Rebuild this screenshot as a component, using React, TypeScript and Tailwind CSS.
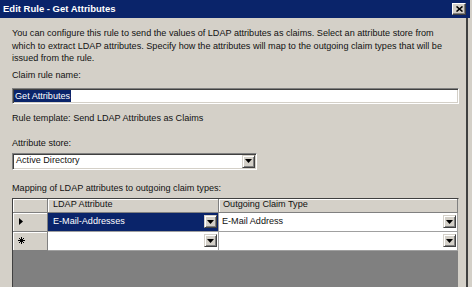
function DropBtn({ h = "h-[13px]" }: { h?: string }) {
  return (
    <div
      className={`flex ${h} w-[13px] shrink-0 items-center justify-center border border-t-[#d4d0c8] border-l-[#d4d0c8] border-b-[#404040] border-r-[#404040] bg-[#d4d0c8] shadow-[inset_1px_1px_0_#ffffff,inset_-1px_-1px_0_#808080]`}
    >
      <svg width="7" height="4" viewBox="0 0 7 4">
        <path d="M0 0h7L3.5 4z" fill="#000" />
      </svg>
    </div>
  );
}

function Sunken({ className = "", children }: { className?: string; children?: React.ReactNode }) {
  return (
    <div
      className={`border border-t-[#808080] border-l-[#808080] border-b-white border-r-white shadow-[inset_1px_1px_0_#404040,inset_-1px_-1px_0_#d4d0c8] ${className}`}
    >
      {children}
    </div>
  );
}

function HeadCell({ className = "", children }: { className?: string; children?: React.ReactNode }) {
  return (
    <div
      className={`flex items-center border-r border-b border-r-[#808080] border-b-[#808080] bg-[#d4d0c8] shadow-[inset_1px_1px_0_#ffffff] ${className}`}
    >
      {children}
    </div>
  );
}

export default function App() {
  return (
    <div className="flex h-[287px] w-[472px] flex-col overflow-hidden bg-[#d4d0c8] font-['Liberation_Sans',Arial,sans-serif] text-[9.1px] text-[#111]">
      {/* title bar */}
      <div className="flex h-[18px] w-[470px] shrink-0 items-center justify-between bg-[#0a246a] pl-[3px] pr-[4px]">
        <span className="text-[9.5px] font-bold text-white">Edit Rule - Get Attributes</span>
        <div className="flex h-[12px] w-[14px] items-center justify-center border border-t-white border-l-white border-b-[#404040] border-r-[#404040] bg-[#d4d0c8] shadow-[inset_-1px_-1px_0_#808080]">
          <svg width="7" height="6" viewBox="0 0 7 6">
            <path d="M0.5 0.5L6.5 5.5M6.5 0.5L0.5 5.5" stroke="#000" strokeWidth="1.6" />
          </svg>
        </div>
      </div>

      {/* body */}
      <div className="flex min-h-0 w-[468px] flex-1 flex-col border-r-2 border-r-[#404040] pl-[12px] pr-[7px] pt-[9px]">
        <p className="whitespace-nowrap leading-[12.5px]">
          You can configure this rule to send the values of LDAP attributes as claims. Select an attribute store from
          <br />
          which to extract LDAP attributes. Specify how the attributes will map to the outgoing claim types that will be
          <br />
          issued from the rule.
        </p>

        <div className="mt-[4px] leading-[12px]">Claim rule name:</div>
        <Sunken className="mt-[7px] flex h-[16px] items-center bg-white pl-[1px]">
          <span className="bg-[#0a246a] px-[1px] leading-[12px] text-white">Get Attributes</span>
        </Sunken>

        <div className="mt-[8px] leading-[12px]">Rule template: Send LDAP Attributes as Claims</div>

        <div className="mt-[13px] leading-[12px]">Attribute store:</div>
        <Sunken className="mt-[4px] flex h-[17px] w-[245px] items-center justify-between bg-white pl-[3px] pr-[1px]">
          <span>Active Directory</span>
          <DropBtn />
        </Sunken>

        <div className="mt-[12px] leading-[12px]">Mapping of LDAP attributes to outgoing claim types:</div>

        {/* grid */}
        <div className="mt-[4px] flex min-h-0 flex-1 flex-col border-t border-l border-r border-t-[#404040] border-l-[#404040] border-r-[#d4d0c8] bg-[#808080]">
          <div className="flex h-[14px] shrink-0">
            <HeadCell className="w-[35px]" />
            <HeadCell className="w-[171px] pl-[5px]">LDAP Attribute</HeadCell>
            <HeadCell className="flex-1 pl-[4px]">Outgoing Claim Type</HeadCell>
          </div>

          <div className="flex h-[19px] shrink-0">
            <HeadCell className="w-[35px] pl-[6px]">
              <svg width="4" height="7" viewBox="0 0 4 7">
                <path d="M0 0L4 3.5L0 7z" fill="#000" />
              </svg>
            </HeadCell>
            <div className="flex w-[171px] items-center justify-between border-r border-b border-r-[#a0a0a0] border-b-[#a0a0a0] bg-[#0a246a] pl-[5px] pr-[1px]">
              <span className="text-white">E-Mail-Addresses</span>
              <DropBtn />
            </div>
            <div className="flex flex-1 items-center justify-between border-r border-b border-r-[#a0a0a0] border-b-[#a0a0a0] bg-white pl-[3px] pr-[1px]">
              <span>E-Mail Address</span>
              <DropBtn />
            </div>
          </div>

          <div className="flex h-[19px] shrink-0">
            <HeadCell className="w-[35px] pl-[5px]">
              <svg width="7" height="7" viewBox="0 0 7 7">
                <path d="M3.5 0v7M0 3.5h7M1 1l5 5M6 1L1 6" stroke="#000" strokeWidth="1" />
              </svg>
            </HeadCell>
            <div className="flex w-[171px] items-center justify-end border-r border-b border-r-[#a0a0a0] border-b-[#a0a0a0] bg-white pr-[1px]">
              <DropBtn />
            </div>
            <div className="flex flex-1 items-center justify-end border-r border-b border-r-[#a0a0a0] border-b-[#a0a0a0] bg-white pr-[1px]">
              <DropBtn />
            </div>
          </div>
        </div>
      </div>
    </div>
  );
}
